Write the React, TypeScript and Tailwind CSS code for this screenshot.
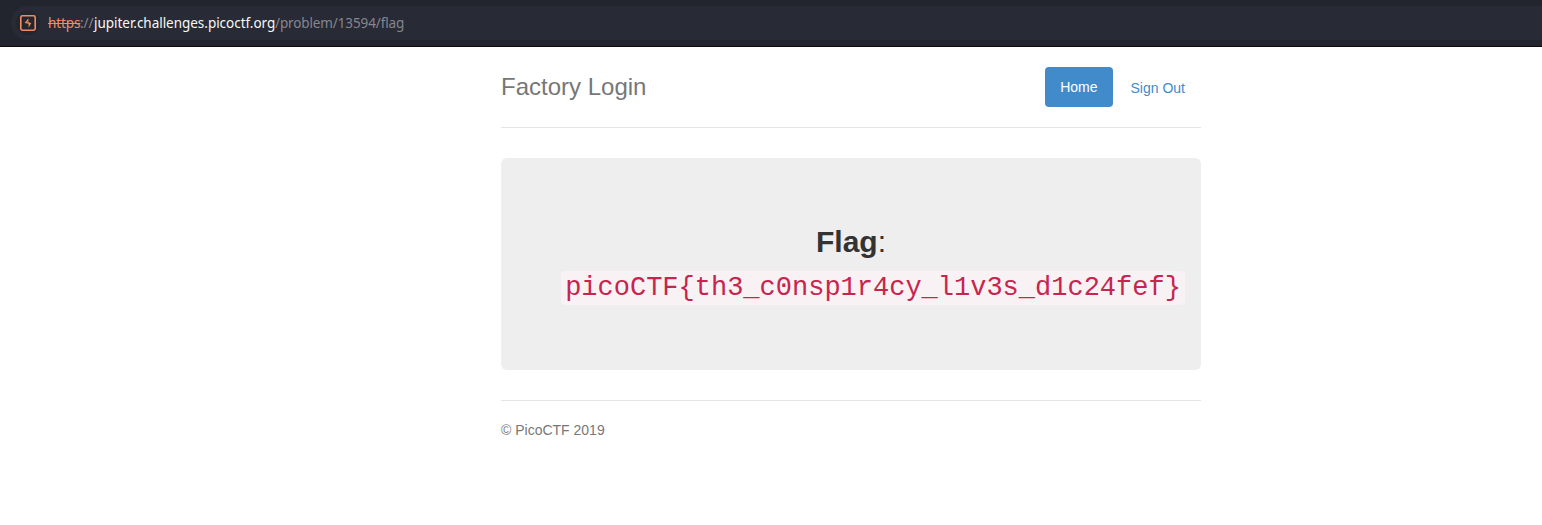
export default function App() {
  return (
    <div className="flex h-[525px] flex-col bg-white font-['Liberation_Sans',Arial,sans-serif] text-sm leading-5 text-[#333]">
      <div className="h-[47px] border-b border-[#0c0c0d] bg-[#22252e] pt-[6px] pb-[6px]">
        <div className="ml-[11px] flex h-[34px] items-center rounded-l-full bg-[#282a36] pl-[5px]">
          <div className="flex size-6 shrink-0 items-center justify-center rounded-full bg-[#23252f]">
            <svg width="16" height="16" viewBox="0 0 16 16" fill="none">
              <rect x="0.8" y="0.8" width="14.4" height="14.4" rx="1.6" stroke="#f58a61" strokeWidth="1.6" />
              <path d="M8.4 3.2V7.2L11.3 8.1L8.6 12.8V8.7L4.6 7.9Z" fill="#f58a61" />
              <path d="M7.5 6V7.2H6.5Z" fill="#23252f" />
            </svg>
          </div>
          <div className="ml-2 flex font-['Noto_Sans',sans-serif] text-[13.5px] whitespace-nowrap text-[#85868e]">
            <span className="w-8 tracking-[-0.1px] text-[#f58a61] line-through decoration-1">https</span>
            <span className="w-[14px] tracking-[-0.1px]">://</span>
            <span className="w-[181px] tracking-[-0.03px] text-[#f8f8f2]">jupiter.challenges.picoctf.org</span>
            <span className="tracking-[-0.12px]">/problem/13594/flag</span>
          </div>
        </div>
      </div>
      <div className="ml-[501px] w-[700px] pt-5">
        <header className="mb-[30px] flex h-[61px] justify-between border-b border-[#e5e5e5]">
          <h3 className="text-2xl leading-10 text-[#777]">Factory Login</h3>
          <nav className="flex h-10 gap-[3px] pr-px">
            <a className="rounded bg-[#428bca] px-[15px] py-[10px] text-white">Home</a>
            <a className="px-[15px] py-[11px] text-[#428bca]">Sign Out</a>
          </nav>
        </header>
        <main className="mb-[30px] h-[212px] rounded-md bg-[#eee] px-[60px] pt-[63px] text-center">
          <p className="text-[30px] leading-[42px]"><b>Flag</b>:</p>
          <code className="mt-2 flex h-[34px] w-[624px] items-center justify-center rounded bg-[#f9f2f4] font-['Liberation_Mono',monospace] text-[27px] text-[#c7254e]">picoCTF&#123;th3_c0nsp1r4cy_l1v3s_d1c24fef&#125;</code>
        </main>
        <footer className="border-t border-[#e5e5e5] pt-[19px] text-[#777]">© PicoCTF 2019</footer>
      </div>
    </div>
  );
}
